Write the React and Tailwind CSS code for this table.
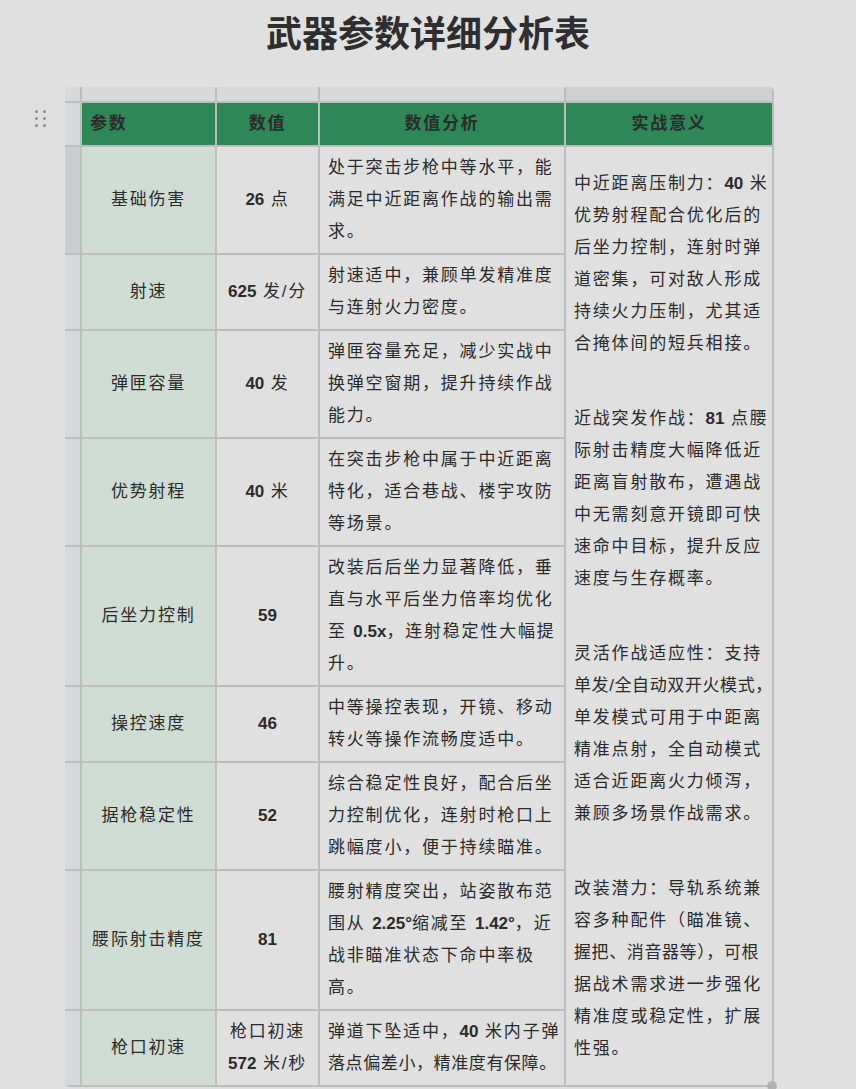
import React from "react";

const rows = [
  { name: "基础伤害", value: ["26 点"], analysis: ["处于突击步枪中等水平，能", "满足中近距离作战的输出需", "求。"] },
  { name: "射速", value: ["625 发/分"], analysis: ["射速适中，兼顾单发精准度", "与连射火力密度。"] },
  { name: "弹匣容量", value: ["40 发"], analysis: ["弹匣容量充足，减少实战中", "换弹空窗期，提升持续作战", "能力。"] },
  { name: "优势射程", value: ["40 米"], analysis: ["在突击步枪中属于中近距离", "特化，适合巷战、楼宇攻防", "等场景。"] },
  { name: "后坐力控制", value: ["59"], analysis: ["改装后后坐力显著降低，垂", "直与水平后坐力倍率均优化", "至 0.5x，连射稳定性大幅提", "升。"] },
  { name: "操控速度", value: ["46"], analysis: ["中等操控表现，开镜、移动", "转火等操作流畅度适中。"] },
  { name: "据枪稳定性", value: ["52"], analysis: ["综合稳定性良好，配合后坐", "力控制优化，连射时枪口上", "跳幅度小，便于持续瞄准。"] },
  { name: "腰际射击精度", value: ["81"], analysis: ["腰射精度突出，站姿散布范", "围从 2.25°缩减至 1.42°，近", "战非瞄准状态下命中率极", "高。"] },
  { name: "枪口初速", value: ["枪口初速", "572 米/秒"], analysis: ["弹道下坠适中，40 米内子弹", "落点偏差小，精准度有保障。"] },
];

const meaning = [
  ["中近距离压制力：40 米", "优势射程配合优化后的", "后坐力控制，连射时弹", "道密集，可对敌人形成", "持续火力压制，尤其适", "合掩体间的短兵相接。"],
  ["近战突发作战：81 点腰", "际射击精度大幅降低近", "距离盲射散布，遭遇战", "中无需刻意开镜即可快", "速命中目标，提升反应", "速度与生存概率。"],
  ["灵活作战适应性：支持", "单发/全自动双开火模式，", "单发模式可用于中距离", "精准点射，全自动模式", "适合近距离火力倾泻，", "兼顾多场景作战需求。"],
  ["改装潜力：导轨系统兼", "容多种配件（瞄准镜、", "握把、消音器等），可根", "据战术需求进一步强化", "精准度或稳定性，扩展", "性强。"],
];

// these lines are a bit too long for their cell, squeeze them
const tight = new Set(["单发/全自动双开火模式，", "落点偏差小，精准度有保障。", "握把、消音器等），可根"]);

// numbers show up bold in the original sheet
function Rich({ text }) {
  const parts = text.split(/(\d+(?:\.\d+)?[°x]?)/);
  return parts.map((p, i) =>
    i % 2 ? (
      <span key={i} className="font-bold tracking-normal">{p}</span>
    ) : (
      <React.Fragment key={i}>{p}</React.Fragment>
    )
  );
}

function Lines({ lines }) {
  return lines.map((l, i) => (
    <div
      key={i}
      className={
        tight.has(l)
          ? "h-[32px] leading-[32px] whitespace-nowrap tracking-[0.6px]"
          : "h-[32px] leading-[32px] whitespace-nowrap"
      }
    >
      <Rich text={l} />
    </div>
  ));
}

function DragHandle() {
  return (
    <div className="absolute left-[-30px] top-[23px] grid grid-cols-2 gap-x-[5px] gap-y-[4px]">
      {[0, 1, 2, 3, 4, 5].map((i) => (
        <div key={i} className="w-[3px] h-[3px] rounded-full bg-[#8a8b92]" />
      ))}
    </div>
  );
}

export default function App() {
  return (
    <div className="min-h-screen bg-[#e0e0e0] text-[#2b2b2b] font-['Liberation_Sans','Noto_Sans_CJK_SC',sans-serif]">
      <h1 className="pt-[12px] text-center text-[36px] leading-[46px] font-bold text-[#2e2e2e]">
        武器参数详细分析表
      </h1>

      <div className="relative ml-[65px] mt-[29px] w-fit">
        <DragHandle />
        <div className="grid grid-cols-[15px_133px_101px_244px_206px] gap-[2px] pr-[2px] pb-[2px] bg-[#bdbdbd] rounded-t-[5px] rounded-bl-[5px] overflow-hidden text-[17px] tracking-[1.8px]">
          {/* top strip */}
          <div className="h-[14px] bg-[#d8d9db]" />
          <div className="h-[14px] bg-[#d8d9db]" />
          <div className="h-[14px] bg-[#d8d9db]" />
          <div className="h-[14px] bg-[#d8d9db]" />
          <div className="h-[14px] bg-[#cfd0d2]" />

          {/* header */}
          <div className="bg-[#d8d9db]" />
          <div className="h-[42px] bg-[#2e8757] font-bold flex items-center pl-[8px]">参数</div>
          <div className="bg-[#2e8757] font-bold flex items-center justify-center">数值</div>
          <div className="bg-[#2e8757] font-bold flex items-center justify-center">数值分析</div>
          <div className="bg-[#2e8757] font-bold flex items-center justify-center">实战意义</div>

          {rows.map((r, idx) => (
            <React.Fragment key={r.name}>
              <div className={idx === 0 ? "bg-[#cbccce]" : "bg-[#d8d9db]"} />
              <div className="bg-[#d0ddd4] flex items-center justify-center whitespace-nowrap">{r.name}</div>
              <div className="bg-[#e0e0e0] flex flex-col items-center justify-center">
                <Lines lines={r.value} />
              </div>
              <div className="bg-[#e0e0e0] py-[5px] pl-[8px]">
                <Lines lines={r.analysis} />
              </div>
              {idx === 0 && (
                <div className="row-span-9 bg-[#e0e0e0] pl-[8px] flex flex-col justify-center gap-[43px]">
                  {meaning.map((p, i) => (
                    <div key={i}>
                      <Lines lines={p} />
                    </div>
                  ))}
                </div>
              )}
            </React.Fragment>
          ))}
        </div>
        <div className="absolute right-[-3px] bottom-[-4px] w-[10px] h-[10px] rounded-full bg-[#b3b3b3]" />
      </div>
    </div>
  );
}
